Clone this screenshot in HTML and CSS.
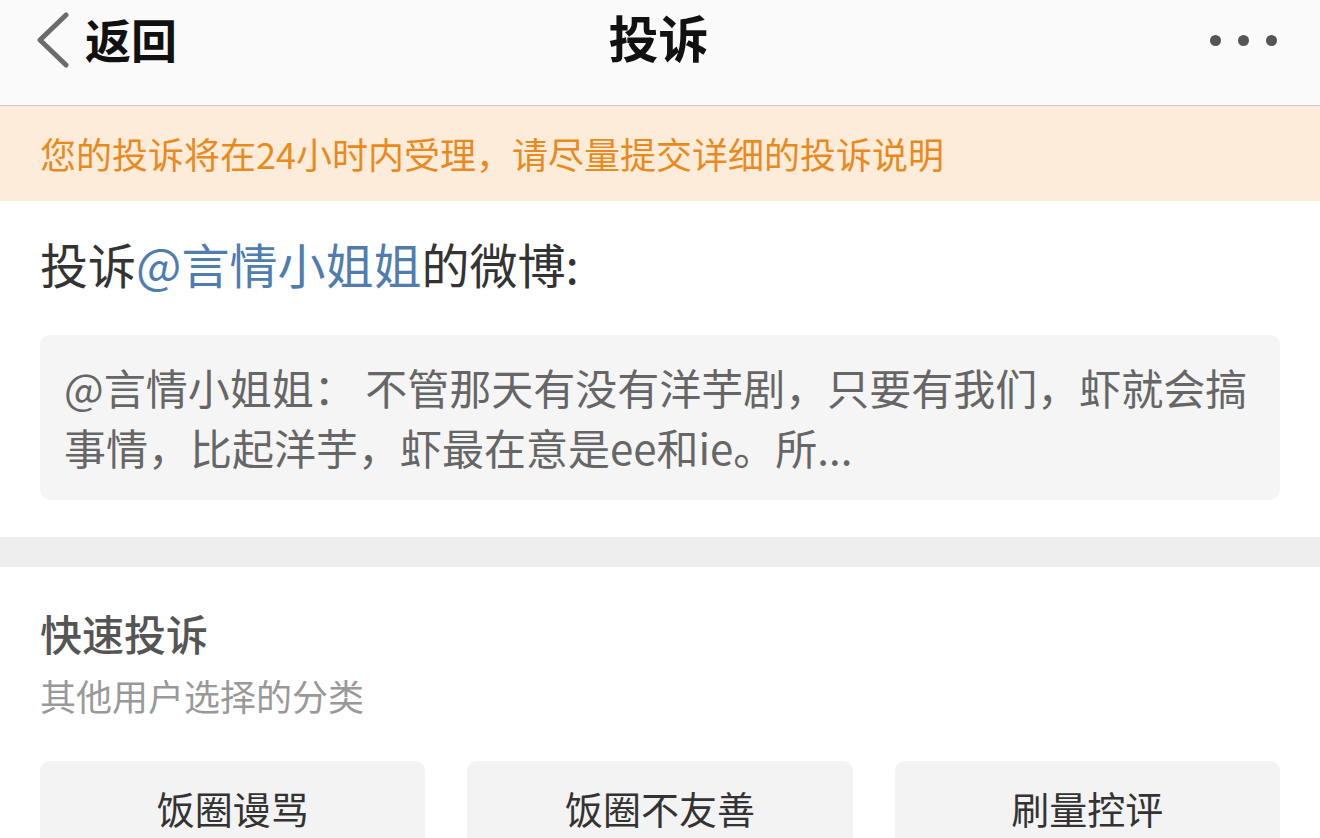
FILE: index.html
```html
<!DOCTYPE html>
<html lang="zh-CN">
<head>
    <meta charset="UTF-8">
    <meta name="viewport" content="width=device-width, initial-scale=1.0">
    <title>投诉</title>
    <link rel="stylesheet" href="styles.css">
</head>
<body>
    <div class="header">
        <div class="back">
            <svg width="36" height="56" viewBox="0 0 36 56">
                <polyline points="31,3 5,28 31,53" fill="none" stroke="#6b6b6b" stroke-width="5" stroke-linecap="round" stroke-linejoin="round"/>
            </svg>
            <span>返回</span>
        </div>
        <h1>投诉</h1>
        <div class="more">
            <i></i><i></i><i></i>
        </div>
    </div>

    <div class="notice">您的投诉将在24小时内受理，请尽量提交详细的投诉说明</div>

    <div class="target">
        <h2>投诉<a href="#">@言情小姐姐</a>的微博:</h2>
        <div class="quote">@言情小姐姐： 不管那天有没有洋芋剧，只要有我们，虾就会搞事情，比起洋芋，虾最在意是ee和ie。所...</div>
    </div>

    <div class="divider"></div>

    <div class="quick">
        <h3>快速投诉</h3>
        <p>其他用户选择的分类</p>
        <div class="options">
            <button>饭圈谩骂</button>
            <button>饭圈不友善</button>
            <button>刷量控评</button>
        </div>
    </div>
</body>
</html>
```

FILE: styles.css
```css
body {
    margin: 0;
    padding: 0;
    background: #fff;
    font-family: "Noto Sans CJK SC", "Noto Sans", sans-serif;
    color: #333;
}
.header {
    height: 105px;
    background: #fafafa;
    border-bottom: 1px solid #c9c9c9;
    display: grid;
    grid-template-columns: 1fr auto 1fr;
    align-items: center;
    padding: 0 43px 0 40px;
}
.back {
    display: flex;
    align-items: center;
    gap: 14px;
    font-size: 46px;
    font-weight: bold;
    color: #111;
    margin: 0 0 30px -5px;
}
.back svg {
    display: block;
    margin-top: 4px;
}
.header h1 {
    margin: 0 0 34px;
    font-size: 50px;
    font-weight: bold;
    color: #111;
}
.more {
    justify-self: end;
    display: flex;
    gap: 17px;
    margin-bottom: 26px;
}
.more i {
    width: 11px;
    height: 11px;
    border-radius: 50%;
    background: #555;
}
.notice {
    height: 95px;
    background: #feecdb;
    color: #ea8a1d;
    font-size: 36px;
    line-height: 95px;
    padding: 0 40px;
}
.target {
    padding: 28px 40px 37px;
}
.target h2 {
    margin: 0 0 38px;
    font-size: 48px;
    font-weight: normal;
    line-height: 68px;
    color: #333;
}
.target h2 a {
    color: #4f7daf;
    text-decoration: none;
}
.quote {
    background: #f5f5f5;
    border-radius: 10px;
    padding: 22px 24px 23px;
    font-size: 42px;
    line-height: 60px;
    color: #666;
}
.divider {
    height: 30px;
    background: #eee;
}
.quick {
    padding: 36px 40px 0;
}
.quick h3 {
    margin: 0;
    font-size: 42px;
    font-weight: 500;
    line-height: 60px;
    color: #555;
}
.quick p {
    margin: 6px 0 0;
    font-size: 36px;
    line-height: 52px;
    color: #999;
}
.options {
    display: grid;
    grid-template-columns: repeat(3, 1fr);
    gap: 42px;
    margin-top: 40px;
}
.options button {
    height: 100px;
    border: none;
    border-radius: 10px;
    background: #f3f3f3;
    font-family: inherit;
    font-size: 38px;
    color: #333;
    padding: 0 0 8px;
}
```
